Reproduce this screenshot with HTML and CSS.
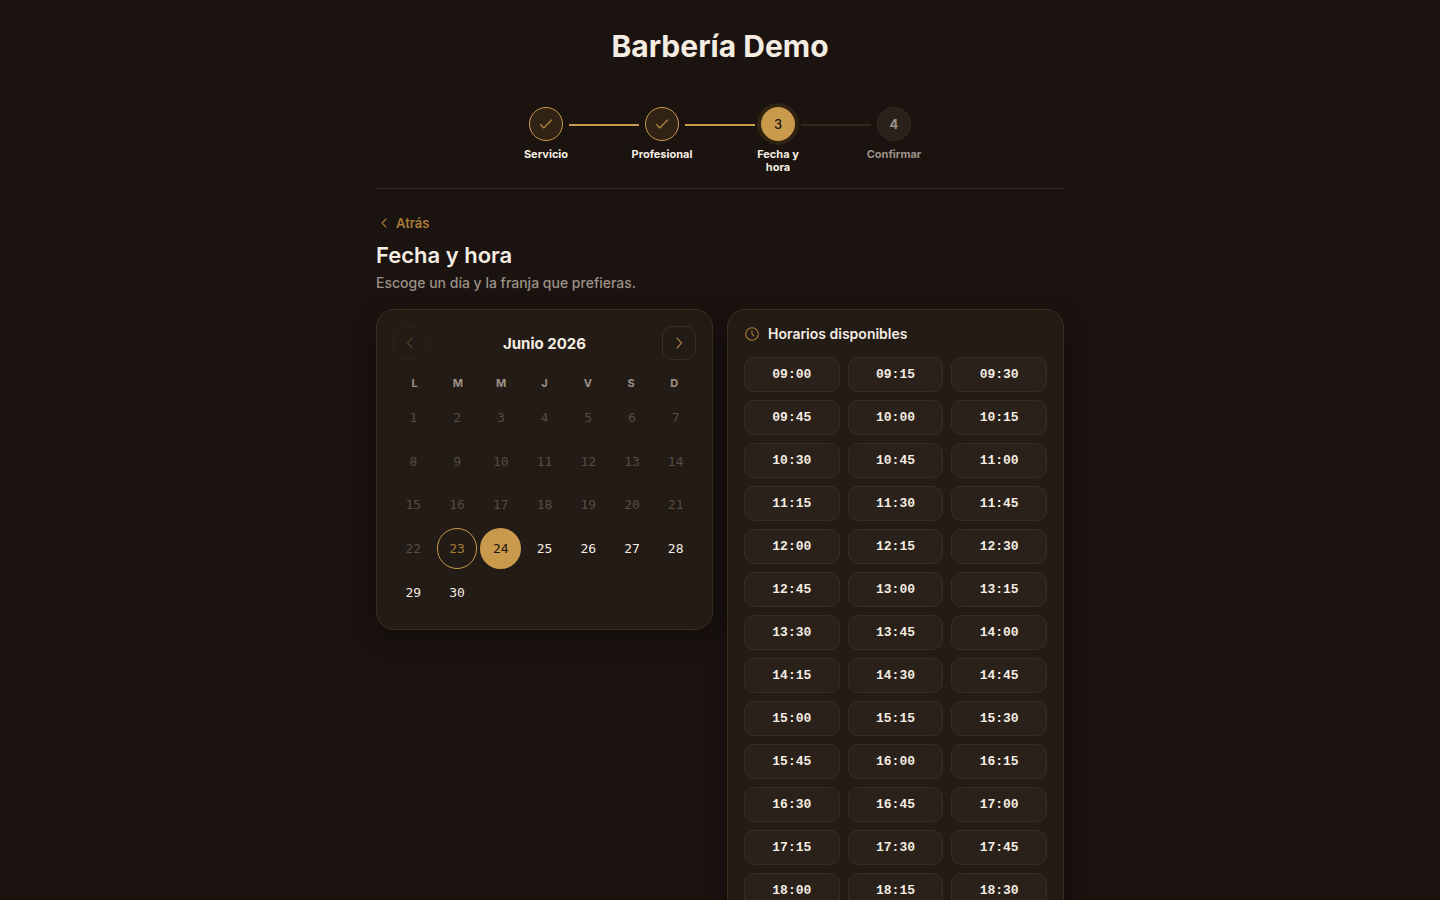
FILE: index.html
```html
<!DOCTYPE html>
<html lang="es">
<head>
    <meta charset="UTF-8">
    <meta name="viewport" content="width=device-width, initial-scale=1.0">
    <title>Barbería Demo</title>
    <link rel="stylesheet" href="styles.css">
</head>
<body>
    <div class="container">
        <header class="header">
            <h1>Barbería Demo</h1>
            <ol class="steps">
                <li class="step done">
                    <span class="step-circle"><svg class="icon" viewBox="0 0 16 16"><path d="M2.500 8.500 5.800 12l7.700-8"/></svg></span>
                    <span class="step-label">Servicio</span>
                </li>
                <li class="step-line active" aria-hidden="true"></li>
                <li class="step done">
                    <span class="step-circle"><svg class="icon" viewBox="0 0 16 16"><path d="M2.500 8.500 5.800 12l7.700-8"/></svg></span>
                    <span class="step-label">Profesional</span>
                </li>
                <li class="step-line active" aria-hidden="true"></li>
                <li class="step current" aria-current="step">
                    <span class="step-circle">3</span>
                    <span class="step-label">Fecha y hora</span>
                </li>
                <li class="step-line" aria-hidden="true"></li>
                <li class="step">
                    <span class="step-circle">4</span>
                    <span class="step-label">Confirmar</span>
                </li>
            </ol>
        </header>

        <main>
            <button type="button" class="back"><svg class="icon" viewBox="0 0 16 16"><path d="M10 4 6 8l4 4"/></svg>Atrás</button>
            <h2>Fecha y hora</h2>
            <p class="subtitle">Escoge un día y la franja que prefieras.</p>

            <div class="columns">
                <section class="card">
                    <div class="month">
                        <button type="button" class="nav" aria-label="Mes anterior" disabled><svg class="icon" viewBox="0 0 16 16"><path d="M10 3 5.500 8l4.500 5"/></svg></button>
                        <h3>Junio 2026</h3>
                        <button type="button" class="nav" aria-label="Mes siguiente"><svg class="icon" viewBox="0 0 16 16"><path d="m6 3 4.500 5L6 13"/></svg></button>
                    </div>
                    <div class="weekdays">
                        <span>L</span><span>M</span><span>M</span><span>J</span><span>V</span><span>S</span><span>D</span>
                    </div>
                    <div class="days" id="days"></div>
                </section>

                <section class="card">
                    <h3 class="slots-title"><svg class="icon" viewBox="0 0 16 16"><circle cx="8" cy="8" r="6.300"/><path d="M8 4.500V8l1.800 1.800"/></svg>Horarios disponibles</h3>
                    <div class="slots" id="slots"></div>
                </section>
            </div>
        </main>
    </div>

    <script>
        const hoy = 23;
        const elegido = 24;

        // Días del mes: junio de 2026 empieza en lunes
        const days = document.getElementById('days');
        for (let d = 1; d <= 30; d++) {
            const b = document.createElement('button');
            b.type = 'button';
            b.className = 'day';
            b.textContent = d;
            if (d < hoy) b.disabled = true;
            if (d === hoy) b.classList.add('today');
            if (d === elegido) b.classList.add('selected');
            days.appendChild(b);
        }

        // Franjas cada 15 minutos, de 09:00 a 19:45
        const slots = document.getElementById('slots');
        for (let m = 9 * 60; m < 20 * 60; m += 15) {
            const b = document.createElement('button');
            b.type = 'button';
            b.className = 'slot';
            b.textContent = String(Math.floor(m / 60)).padStart(2, '0') + ':' + String(m % 60).padStart(2, '0');
            slots.appendChild(b);
        }
    </script>
</body>
</html>
```
FILE: styles.css
```css
* {
    box-sizing: border-box;
}
html {
    scrollbar-width: none;
}
body {
    margin: 0;
    background-color: #1b1310;
    color: #f5ede2;
    font-family: Inter, "Liberation Sans", sans-serif;
    font-size: 14px;
}
h1, h2, h3, p {
    margin: 0;
}
button {
    font: inherit;
    color: inherit;
    padding: 0;
    border: none;
    background: none;
    cursor: pointer;
}
.icon {
    width: 16px;
    height: 16px;
    fill: none;
    stroke: currentColor;
    stroke-width: 1.1;
    stroke-linecap: round;
    stroke-linejoin: round;
}
.container {
    max-width: 720px;
    margin: 0 auto;
    padding: 0 16px 40px;
}
.header {
    padding: 28px 0 14px;
    border-bottom: 1px solid #32271a;
}
.header h1 {
    font-size: 30px;
    line-height: 36px;
    font-weight: 700;
    text-align: center;
}

/* Pasos */
.steps {
    display: flex;
    justify-content: center;
    list-style: none;
    margin: 43px 0 0;
    padding: 0;
}
.step {
    display: flex;
    flex-direction: column;
    align-items: center;
    gap: 7px;
    width: 46px;
    color: #9c9186;
}
.step-circle {
    display: flex;
    align-items: center;
    justify-content: center;
    width: 34px;
    height: 34px;
    border: 1px solid #352a1e;
    border-radius: 50%;
    background-color: #2a211a;
    font-size: 13px;
    font-weight: 700;
}
.step-label {
    font-size: 11px;
    line-height: 13px;
    font-weight: 700;
    text-align: center;
}
.step.done, .step.current {
    color: #f5ede2;
}
.step.done .step-circle {
    border-color: #c99a4b;
    background-color: #302316;
    color: #b88a40;
}
.step.current .step-circle {
    border-color: #c99a4b;
    background-color: #c99a4b;
    box-shadow: 0 0 0 4px #302213;
    color: #1b1310;
    font-weight: 500;
}
.step-line {
    width: 70px;
    height: 2px;
    margin-top: 17px;
    background-color: #32271d;
}
.step-line.active {
    background-color: #c99a4b;
}

/* Encabezado de la sección */
.back {
    display: flex;
    align-items: center;
    gap: 4px;
    margin-top: 24px;
    height: 20px;
    color: #a87b35;
    font-size: 13px;
    font-weight: 600;
}
main h2 {
    margin-top: 8px;
    font-size: 22px;
    line-height: 28px;
    font-weight: 600;
}
.subtitle {
    margin-top: 3px;
    line-height: 22px;
    font-weight: 500;
    color: #9c9186;
}

/* Tarjetas */
.columns {
    display: grid;
    grid-template-columns: 1fr 1fr;
    align-items: start;
    gap: 14px;
    margin-top: 15px;
}
.card {
    padding: 16px;
    border: 1px solid #3a2e1c;
    border-radius: 18px;
    background-color: #231b16;
    box-shadow: 0 8px 24px rgba(0, 0, 0, 0.4);
}
.month {
    display: flex;
    align-items: center;
    justify-content: space-between;
}
.month h3 {
    font-size: 15px;
    font-weight: 700;
}
.nav {
    display: flex;
    align-items: center;
    justify-content: center;
    width: 34px;
    height: 34px;
    border: 1px solid #3a2e1c;
    border-radius: 10px;
    color: #c99a4b;
}
.nav:disabled {
    opacity: 0.35;
}
.weekdays {
    display: grid;
    grid-template-columns: repeat(7, 1fr);
    margin-top: 16px;
    margin-bottom: 7px;
    line-height: 14px;
    font-size: 11px;
    font-weight: 700;
    text-align: center;
    color: #9c9186;
}
.days {
    display: grid;
    grid-template-columns: repeat(7, 1fr);
    gap: 3px;
}
.day {
    aspect-ratio: 1;
    border: 1px solid transparent;
    border-radius: 50%;
    font-family: "DejaVu Sans Mono", monospace;
    font-size: 13px;
}
.day:disabled {
    color: #554c44;
}
.day.today {
    border-color: #c99a4b;
    color: #a87b35;
}
.day.selected {
    background-color: #c99a4b;
    color: #1b1310;
}
.slots-title {
    display: flex;
    align-items: center;
    gap: 8px;
    line-height: 16px;
    font-size: 14px;
    font-weight: 600;
}
.slots-title .icon {
    color: #a87b35;
}
.slots {
    display: grid;
    grid-template-columns: repeat(3, 1fr);
    gap: 8px;
    margin-top: 15px;
}
.slot {
    height: 35px;
    border: 1px solid #3a2e1f;
    border-radius: 10px;
    background-color: #2a211a;
    font-family: "Liberation Mono", monospace;
    font-size: 13px;
    font-weight: 700;
}
```
